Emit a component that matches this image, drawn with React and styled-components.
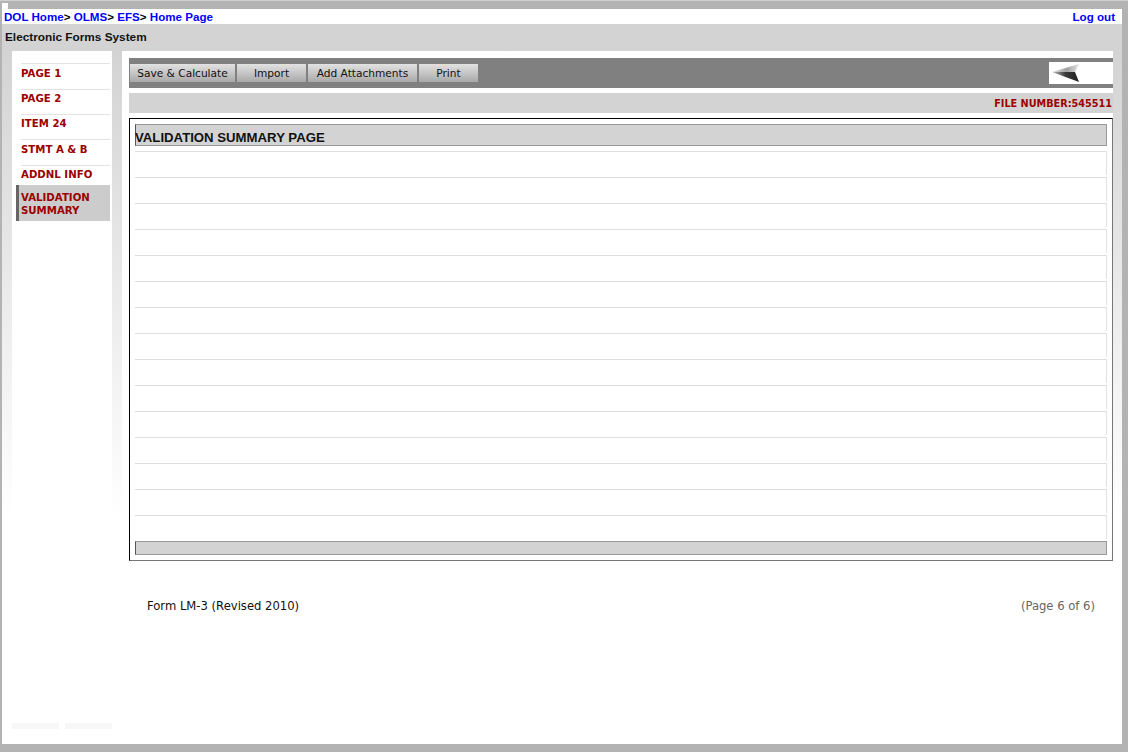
import React from "react";
import styled, { createGlobalStyle } from "styled-components";

const GlobalStyle = createGlobalStyle`
  html, body {
    margin: 0;
    padding: 0;
    background: #b3b3b3;
  }
`;

const Page = styled.div`
  width: 1128px;
  height: 752px;
  display: flex;
  flex-direction: column;
  overflow: hidden;
  border-top: 1px solid #cfcfcf;
  box-sizing: border-box;
`;

const TopBand = styled.div`
  height: 8px;
  padding: 2px 0 0 2px;
  box-sizing: border-box;
`;

const Notch = styled.div`
  width: 6px;
  height: 6px;
  background: #fff;
`;

const Frame = styled.div`
  width: 1120px;
  height: 735px;
  margin-left: 2px;
  display: flex;
  flex-direction: column;
  background: linear-gradient(#d3d3d3 0, #d3d3d3 40px, #ececec 300px, #fff 510px);
`;

const NavBar = styled.div`
  height: 15px;
  background: #fff;
  display: flex;
  justify-content: space-between;
  align-items: center;
  padding: 0 7px 0 2px;
  font: bold 11.6px "Liberation Sans", Arial, sans-serif;
`;

const Crumbs = styled.div`
  color: #000;
`;

const NavLink = styled.a`
  color: #0000ff;
  text-decoration: none;
`;

const SystemName = styled.div`
  height: 27px;
  padding-left: 3px;
  box-sizing: border-box;
  color: #111;
  font: bold 11.8px/26px "Liberation Sans", Arial, sans-serif;
`;

const Main = styled.div`
  flex: 1;
  display: flex;
  align-items: flex-start;
  padding-left: 10px;
`;

const SideColumn = styled.div`
  width: 100px;
  height: 678px;
  margin-right: 10px;
  display: flex;
  flex-direction: column;
  justify-content: space-between;
`;

const Sidebar = styled.div`
  flex: 1;
  background: #fff;
  padding: 12px 2px 0 4px;
`;

const SideItem = styled.a`
  display: block;
  height: ${(p) => p.$height}px;
  box-sizing: border-box;
  margin-left: ${(p) => (p.$active ? 0 : 5)}px;
  padding: ${(p) => (p.$active ? "6px 0 0 2px" : `${p.$top}px 0 0 0`)};
  border-top: ${(p) => (p.$active ? "none" : "1px solid #e2e2e2")};
  border-left: ${(p) => (p.$active ? "3px solid #666" : "none")};
  background: ${(p) => (p.$active ? "#cccccc" : "transparent")};
  color: #9c0000;
  font: bold 10.2px/13px "DejaVu Sans", Verdana, sans-serif;
`;

const SideTabs = styled.div`
  display: flex;
  justify-content: space-between;
`;

const SideTab = styled.div`
  width: 47px;
  height: 6px;
  background: #f7f7f7;
`;

const Content = styled.div`
  width: 991px;
  height: 693px;
  background: #fff;
  padding: 7px 0 0 7px;
  box-sizing: border-box;
`;

const Toolbar = styled.div`
  height: 30px;
  background: #808080;
  display: flex;
  align-items: flex-start;
  justify-content: space-between;
  padding: 6px 0 0 1px;
  box-sizing: border-box;
`;

const ButtonRow = styled.div`
  display: flex;
  gap: 2px;
`;

const ToolButton = styled.button`
  width: ${(p) => p.$width}px;
  height: 18px;
  padding: 0;
  border: none;
  background: linear-gradient(#e2e2e2, #a9a9a9);
  color: #111;
  font: 10.6px "DejaVu Sans", Verdana, sans-serif;
`;

const BackBox = styled.div`
  width: 64px;
  height: 22px;
  margin-top: -2px;
  background: #fff;
`;

const FileBar = styled.div`
  height: 20px;
  margin-top: 5px;
  background: #d3d3d3;
  display: flex;
  align-items: center;
  justify-content: flex-end;
  padding: 1px 1px 0 0;
  box-sizing: border-box;
  color: #9c0000;
  font: bold 9.7px "DejaVu Sans", Verdana, sans-serif;
`;

const FormBox = styled.div`
  height: 443px;
  margin-top: 5px;
  padding: 5px;
  box-sizing: border-box;
  border: 1px solid #777;
  border-top-color: #000;
  border-left-color: #000;
`;

const FormTitle = styled.div`
  height: 22px;
  box-sizing: border-box;
  background: #d3d3d3;
  border: 1px solid #999;
  border-left-color: #555;
  color: #111;
  font: bold 13.2px/25px "Liberation Sans", Arial, sans-serif;
  text-indent: -1px;
  margin-bottom: 5px;
`;

const FormRow = styled.div`
  height: 24px;
  margin-bottom: 2px;
  box-sizing: border-box;
  border-top: 1px solid #dedede;
  border-right: 1px solid #e2e2e2;
`;

const FormFoot = styled.div`
  height: 14px;
  box-sizing: border-box;
  background: #d3d3d3;
  border: 1px solid #999;
  border-left-color: #555;
`;

const FootNote = styled.div`
  display: flex;
  justify-content: space-between;
  padding: 38px 18px 0;
  font: 11.6px/14px "DejaVu Sans", Verdana, sans-serif;
  color: #111;
`;

const PageCount = styled.span`
  color: #666;
`;

const BottomBand = styled.div`
  flex: 1;
`;

const ArrowIcon = () => (
  <svg width="64" height="22" viewBox="0 0 64 22">
    <defs>
      <linearGradient id="arrowTop" x1="0" y1="0" x2="1" y2="0">
        <stop offset="0" stopColor="#e0e0e0" />
        <stop offset="0.55" stopColor="#a0a0a0" />
        <stop offset="1" stopColor="#e4e4e4" />
      </linearGradient>
      <linearGradient id="arrowBottom" x1="0" y1="0" x2="1" y2="0">
        <stop offset="0" stopColor="#c4c4c4" />
        <stop offset="0.5" stopColor="#3a3a3a" />
        <stop offset="1" stopColor="#222" />
      </linearGradient>
    </defs>
    <path d="M3 10 L30 2 L26 10 Z" fill="url(#arrowTop)" />
    <path d="M3 10 L26 10 L30 20 Z" fill="url(#arrowBottom)" />
  </svg>
);

const sideItems = [
  { label: "PAGE 1", height: 26, top: 3 },
  { label: "PAGE 2", height: 25, top: 2 },
  { label: "ITEM 24", height: 25, top: 2 },
  { label: "STMT A & B", height: 26, top: 3 },
  { label: "ADDNL INFO", height: 20, top: 2 },
];

const buttons = [
  { label: "Save & Calculate", width: 105 },
  { label: "Import", width: 69 },
  { label: "Add Attachments", width: 109 },
  { label: "Print", width: 59 },
];

export default function App() {
  return (
    <Page>
      <GlobalStyle />
      <TopBand>
        <Notch />
      </TopBand>
      <Frame>
        <NavBar>
          <Crumbs>
            <NavLink>DOL Home</NavLink>&gt; <NavLink>OLMS</NavLink>&gt; <NavLink>EFS</NavLink>&gt;{" "}
            <NavLink>Home Page</NavLink>
          </Crumbs>
          <NavLink>Log out</NavLink>
        </NavBar>
        <SystemName>Electronic Forms System</SystemName>
        <Main>
          <SideColumn>
            <Sidebar>
              {sideItems.map((item) => (
                <SideItem key={item.label} $height={item.height} $top={item.top}>
                  {item.label}
                </SideItem>
              ))}
              <SideItem $active $height={36}>
                VALIDATION
                <br />
                SUMMARY
              </SideItem>
            </Sidebar>
            <SideTabs>
              <SideTab />
              <SideTab />
            </SideTabs>
          </SideColumn>
          <Content>
            <Toolbar>
              <ButtonRow>
                {buttons.map((b) => (
                  <ToolButton key={b.label} $width={b.width}>
                    {b.label}
                  </ToolButton>
                ))}
              </ButtonRow>
              <BackBox>
                <ArrowIcon />
              </BackBox>
            </Toolbar>
            <FileBar>FILE NUMBER:545511</FileBar>
            <FormBox>
              <FormTitle>VALIDATION SUMMARY PAGE</FormTitle>
              {Array.from({ length: 15 }, (_, i) => (
                <FormRow key={i} />
              ))}
              <FormFoot />
            </FormBox>
            <FootNote>
              <span>Form LM-3 (Revised 2010)</span>
              <PageCount>(Page 6 of 6)</PageCount>
            </FootNote>
          </Content>
          <BottomBand />
        </Main>
      </Frame>
    </Page>
  );
}
